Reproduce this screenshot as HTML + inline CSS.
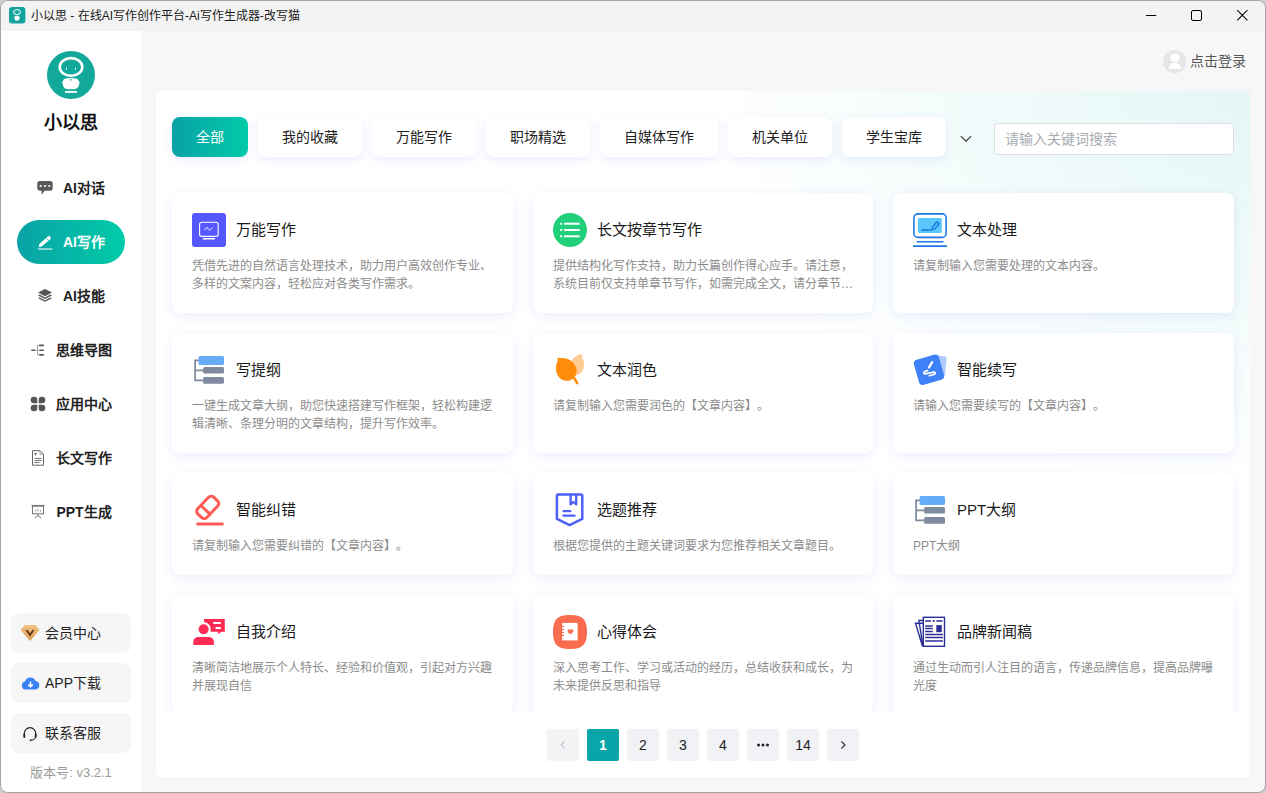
<!DOCTYPE html>
<html lang="zh-CN"><head><meta charset="utf-8">
<style>
*{margin:0;padding:0;box-sizing:border-box}
html,body{width:1266px;height:793px;overflow:hidden;background:#cdcdcd;font-family:"Liberation Sans",sans-serif;font-weight:350;text-spacing-trim:space-all}
.win{position:absolute;left:0;top:0;width:1266px;height:793px;border:1px solid #a3a3a3;border-radius:8px;overflow:hidden;background:#f7f7f7}
.a{position:absolute}
.tb{position:absolute;left:0;top:0;width:1264px;height:30px;background:#f3f3f3}
.tb .ttl{position:absolute;left:30px;top:7px;font-size:12px;line-height:16px;color:#1b1b1b;white-space:nowrap}
.side{position:absolute;left:0;top:30px;width:140px;height:762px;background:#fff}
.nav{position:absolute;left:0;width:140px;height:20px;line-height:20px;display:flex;align-items:center;justify-content:center;font-size:14px;font-weight:bold;color:#1f1f1f;white-space:nowrap}
.nav svg{margin-right:10px;flex:none}
.pill{position:absolute;left:16px;top:189px;width:108px;height:44px;border-radius:22px;background:linear-gradient(90deg,#0aa2a5,#01cba9)}
.sbtn{position:absolute;left:10px;width:120px;height:40px;border-radius:8px;background:#f6f6f6;font-size:14px;color:#222}
.sbtn svg{position:absolute}
.sbtn span{position:absolute;left:34px;top:11px;line-height:18px;white-space:nowrap}
.panel{position:absolute;left:155px;top:90px;width:1094px;height:686px;border-radius:4px;background:radial-gradient(ellipse 540px 400px at 100% 0%,#e4f6f6 0%,rgba(255,255,255,0) 100%),#fff;overflow:hidden}
.tabs{position:absolute;left:16px;top:26px;height:40px;display:flex}
.tab{height:40px;padding:0 24px;margin-right:10px;border-radius:8px;background:#fff;font-size:14px;color:#222;line-height:40px;white-space:nowrap;box-shadow:0 3px 10px rgba(70,90,255,.10)}
.tab.on{background:linear-gradient(90deg,#0aa2a5,#01cba9);color:#fff}
.search{position:absolute;left:838px;top:32px;width:240px;height:32px;border:1px solid #dcdfe6;border-radius:4px;background:#fff;font-size:14px;color:#a8abb2;line-height:30px;padding-left:10px;white-space:nowrap}
.grid{position:absolute;left:0;top:82px;width:1094px;height:540px;overflow:hidden}
.card{position:absolute;width:341px;height:120px;background:#fff;border-radius:8px;box-shadow:0 3px 12px rgba(70,90,255,.10)}
.card svg{position:absolute;left:20px;top:20px}
.card .t{position:absolute;left:64px;top:20px;font-size:15px;line-height:34px;color:#1a1a1a;white-space:nowrap}
.card .d{position:absolute;left:20px;top:64px;font-size:12px;line-height:18px;color:#8c8c8c;white-space:nowrap}
.pg{position:absolute;top:638px;width:32px;height:32px;border-radius:2px;background:#f0f2f5;font-size:14px;color:#222;text-align:center;line-height:32px}
.pg.on{background:#08a6a8;color:#fff;font-weight:bold}
.pg.dis{background:#f4f4f6}
</style></head><body>
<div class="win">
  <div class="tb">
    <svg class="a" style="left:8px;top:6px" width="17" height="17" viewBox="0 0 17 17"><rect x="0" y="0" width="16.4" height="16.4" rx="3" fill="#12a49c"/><ellipse cx="8" cy="5.2" rx="3.5" ry="2.6" fill="none" stroke="#fff" stroke-width="1"/><circle cx="6.7" cy="5.6" r=".45" fill="#fff"/><circle cx="9.3" cy="5.6" r=".45" fill="#fff"/><path d="M5.9 9.2q2.1-.6 4.2 0l.5.8.6.3-.6.3q0 2.6-1.6 2.9H7q-1.6-.3-1.6-2.9l-.6-.3.6-.3z" fill="#fff"/></svg>
    <div class="ttl">小以思 - 在线AI写作创作平台-Ai写作生成器-改写猫</div>
    <svg class="a" style="left:1140px;top:4px" width="20" height="20"><path d="M5 10.5h10.2" stroke="#000" stroke-width="1"/></svg>
    <svg class="a" style="left:1185px;top:4px" width="20" height="20"><rect x="5.5" y="5.5" width="10" height="10" rx="1.5" fill="none" stroke="#000" stroke-width="1"/></svg>
    <svg class="a" style="left:1231px;top:4px" width="20" height="20"><path d="M5.2 5.2l10.2 10.2M15.4 5.2l-10.2 10.2" stroke="#000" stroke-width="1.05"/></svg>
  </div>
  <div class="side">
    <svg class="a" style="left:46px;top:20px" width="48" height="48" viewBox="0 0 48 48"><circle cx="24" cy="24" r="24" fill="#12a89a"/><ellipse cx="24" cy="16" rx="11.3" ry="8.9" fill="none" stroke="#fff" stroke-width="2.6"/><rect x="19" y="16.7" width="1" height="2" fill="#fff"/><rect x="28" y="16.7" width="1" height="2" fill="#fff"/><path d="M17.7 27.8Q23.9 26.2 30.1 27.8Q32 29 32.2 31.3L33.3 32.1 32.1 32.6Q32 37.8 27 38.3H20.8Q15.8 37.8 15.7 32.6L14.5 32.1 15.6 31.3Q15.8 29 17.7 27.8z" fill="#fff"/><circle cx="23.9" cy="28.9" r=".8" fill="#12a89a"/><rect x="18" y="40" width="12" height="1.8" fill="#fff"/></svg>
    <div class="a" style="left:0;top:80px;width:140px;text-align:center;font-size:18px;font-weight:bold;line-height:24px;color:#111">小以思</div>
    <div class="nav" style="top:147px"><svg width="16" height="16" viewBox="0 0 16 16"><path d="M3 1h10a2.7 2.7 0 0 1 2.7 2.7v4.4a2.7 2.7 0 0 1-2.7 2.7H7.6L4.6 14.7V10.8H3A2.7 2.7 0 0 1 .3 8.1V3.7A2.7 2.7 0 0 1 3 1z" fill="#5a5a5a"/><circle cx="3.7" cy="6" r="1.05" fill="#fff"/><circle cx="8" cy="6" r="1.05" fill="#fff"/><circle cx="12.3" cy="6" r="1.05" fill="#fff"/></svg>AI对话</div>
    <div class="pill"></div>
    <div class="nav" style="top:201px;color:#fff"><svg width="16" height="16" viewBox="0 0 16 16"><path d="M1.6 12.9L2.31 9.9 10.81 2.5A1.8 1.8 0 0 1 13.17 5.22L4.67 12.62z" fill="#fff"/><path d="M11.5 6.6l-2.4-2.7" stroke="#06b3a6" stroke-width=".6"/><rect x="1" y="14.4" width="14.4" height="1.3" fill="#fff" opacity=".8"/></svg>AI写作</div>
    <div class="nav" style="top:255px"><svg width="16" height="16" viewBox="0 0 16 16"><path d="M8 1l7 3.6-7 3.6-7-3.6z" fill="#555"/><path d="M1 7.4l1.6-.8L8 9.4l5.4-2.8 1.6.8L8 11z" fill="#555"/><path d="M1 10.2l1.6-.8L8 12.2l5.4-2.8 1.6.8L8 13.8z" fill="#555"/></svg>AI技能</div>
    <div class="nav" style="top:309px"><svg width="16" height="16" viewBox="0 0 16 16"><rect x="1" y="7.4" width="4.5" height="1.6" rx=".8" fill="#555"/><path d="M9 3.3h-1.4v9.6H9M5.5 8.2h2" fill="none" stroke="#888" stroke-width=".8"/><rect x="9" y="2.5" width="5" height="1.7" rx=".8" fill="#555"/><rect x="9" y="7.4" width="5" height="1.7" rx=".8" fill="#555"/><rect x="9" y="12.1" width="5" height="1.7" rx=".8" fill="#555"/></svg>思维导图</div>
    <div class="nav" style="top:363px"><svg width="16" height="16" viewBox="0 0 16 16"><path d="M7.3 7.3H4A3.3 3.3 0 1 1 7.3 4z" fill="#555"/><path d="M8.7 7.3H12A3.3 3.3 0 1 0 8.7 4z" fill="#555"/><path d="M7.3 8.7H4A3.3 3.3 0 1 0 7.3 12z" fill="#555"/><path d="M8.7 8.7H12A3.3 3.3 0 1 1 8.7 12z" fill="#555"/></svg>应用中心</div>
    <div class="nav" style="top:417px"><svg width="16" height="16" viewBox="0 0 16 16"><path d="M2.5 .7h7.5l3.5 3.5v11h-11z" fill="none" stroke="#666" stroke-width="1"/><path d="M10 .7v3.5h3.5" fill="none" stroke="#888" stroke-width=".8"/><path d="M4 3.6h3M5.5 3.6v2M4.5 8.5h7M4.5 10.5h7M4.5 12.5h5" stroke="#666" stroke-width=".9"/></svg>长文写作</div>
    <div class="nav" style="top:471px"><svg width="16" height="16" viewBox="0 0 16 16"><path d="M1.5 1.5h13" stroke="#777" stroke-width="1.2"/><rect x="2.5" y="2.2" width="11" height="7.6" fill="none" stroke="#777" stroke-width="1"/><path d="M5.5 7.5v-2M8 7.5v-3M10.5 7.5v-1.5" stroke="#999" stroke-width="1"/><path d="M8 9.8v2M8 11.5l-3 2.5M8 11.5l3 2.5" stroke="#777" stroke-width="1"/></svg>PPT生成</div>
    <div class="sbtn" style="top:582px"><svg style="left:9px;top:11px" width="20" height="18" viewBox="0 0 20 18"><defs><linearGradient id="dg" x1="0" y1="0" x2="0" y2="1"><stop offset="0" stop-color="#f3c386"/><stop offset="1" stop-color="#dc9a52"/></linearGradient></defs><path d="M4.5 1h11l4 5-9.5 11L.5 6z" fill="url(#dg)"/><path d="M6.5 6l3.5 5 3.5-5" fill="none" stroke="#5a3510" stroke-width="1.8"/></svg><span>会员中心</span></div>
    <div class="sbtn" style="top:632px"><svg style="left:10px;top:14px" width="19" height="13" viewBox="0 0 19 13"><path d="M4.5 12.5A4 4 0 0 1 4 4.6 5.5 5.5 0 0 1 14.5 4a4.3 4.3 0 0 1 .3 8.5z" fill="#3981f5"/><path d="M9.5 4.5v5M7.3 7.6l2.2 2.2 2.2-2.2" fill="none" stroke="#fff" stroke-width="1.5"/></svg><span>APP下载</span></div>
    <div class="sbtn" style="top:682px"><svg style="left:11px;top:12px" width="16" height="17" viewBox="0 0 16 17"><path d="M2.3 10.5V8.3a5.7 5.7 0 0 1 11.4 0v2.2" fill="none" stroke="#222" stroke-width="1.1"/><path d="M2.3 9.2v2.8M13.7 9.2v2.8" stroke="#222" stroke-width="1.8" stroke-linecap="round"/><path d="M13.7 12.2q-.4 2.8-4.4 3" fill="none" stroke="#222" stroke-width="1"/><circle cx="8.6" cy="15.2" r="1" fill="#222"/></svg><span>联系客服</span></div>
    <div class="a" style="left:0;top:734px;width:140px;text-align:center;font-size:13px;line-height:16px;color:#9a9a9a;white-space:nowrap">版本号: v3.2.1</div>
  </div>
  <svg class="a" style="left:1161px;top:48px" width="25" height="25" viewBox="0 0 25 25"><circle cx="12.6" cy="12.6" r="11.7" fill="#e6e6e6"/><ellipse cx="12.8" cy="8.9" rx="4.6" ry="4.3" fill="#fff"/><path d="M6.5 19.2q.3-5.2 6.3-5.2t6.3 5.2q0 .9-1 .9H7.5q-1 0-1-.9z" fill="#fff"/></svg>
  <div class="a" style="left:1189px;top:50px;font-size:14px;line-height:20px;color:#555;white-space:nowrap">点击登录</div>
  <div class="panel">
    <div class="tabs">
      <div class="tab on">全部</div><div class="tab">我的收藏</div><div class="tab">万能写作</div><div class="tab">职场精选</div><div class="tab">自媒体写作</div><div class="tab">机关单位</div><div class="tab">学生宝库</div>
    </div>
    <svg class="a" style="left:803px;top:42px" width="14" height="10" viewBox="0 0 14 10"><path d="M1.8 3.2l5.2 5 5.2-5" fill="none" stroke="#303133" stroke-width="1.1"/></svg>
    <div class="search">请输入关键词搜索</div>
    <div class="grid">
      <!-- row 1 -->
      <div class="card" style="left:16px;top:20px"><svg width="34" height="34" viewBox="0 0 34 34"><rect width="34" height="34" rx="3" fill="#5558fe"/><rect x="7.6" y="9.2" width="18.6" height="14.2" rx="2.2" fill="none" stroke="#fff" stroke-width="1.1"/><path d="M10.8 25.7h12.2" stroke="#fff" stroke-width="1.5"/><path d="M11.9 17.4l2.9-3.1 2.9 2.9 3.2-2.9" fill="none" stroke="#fff" stroke-opacity=".55" stroke-width="1.1"/></svg><div class="t">万能写作</div><div class="d">凭借先进的自然语言处理技术，助力用户高效创作专业、<br>多样的文案内容，轻松应对各类写作需求。</div></div>
      <div class="card" style="left:377px;top:20px;width:340px"><svg width="34" height="34" viewBox="0 0 34 34"><circle cx="17" cy="17" r="17" fill="#20d07a"/><g fill="#fff"><rect x="7.2" y="9.7" width="2" height="2" rx=".4"/><rect x="7.2" y="16" width="2" height="2" rx=".4"/><rect x="7.2" y="22.3" width="2" height="2" rx=".4"/><rect x="11.1" y="9.7" width="15.6" height="2"/><rect x="11.1" y="16" width="15.6" height="2"/><rect x="11.1" y="22.3" width="15.6" height="2"/></g></svg><div class="t">长文按章节写作</div><div class="d">提供结构化写作支持，助力长篇创作得心应手。请注意，<br>系统目前仅支持单章节写作，如需完成全文，请分章节…</div></div>
      <div class="card" style="left:737px;top:20px"><svg width="34" height="34" viewBox="0 0 34 34"><rect x=".9" y=".9" width="32.2" height="23.5" rx="4" fill="none" stroke="#1a77e6" stroke-width="1.6"/><rect x="5" y="5" width="23.8" height="15.1" rx="1.5" fill="#5ac6fb"/><path d="M9 16.9h9.8" stroke="#1a77e6" stroke-width="1.5" stroke-linecap="round"/><path d="M19 16.4l.4-2.2 4.4-5.4 2.3 1.9-4.4 5.4z" fill="none" stroke="#1a77e6" stroke-width="1.4" stroke-linejoin="round"/><path d="M3.7 28.8h26.7" stroke="#1a77e6" stroke-width="1.6"/><path d="M0 33.1h34" stroke="#1a77e6" stroke-width="1.6"/></svg><div class="t">文本处理</div><div class="d">请复制输入您需要处理的文本内容。</div></div>
      <!-- row 2 -->
      <div class="card" style="left:16px;top:160px"><svg width="34" height="34" viewBox="0 0 34 34"><path d="M7 7.4H3.1v19.9h8.2M3.1 17.45h8.2" fill="none" stroke="#7f8a9e" stroke-width="1.7"/><rect x="6.6" y="2.9" width="25.4" height="9" rx="1.5" fill="#65abf5"/><rect x="11.1" y="14" width="20.9" height="6.6" rx="1.5" fill="#7f8a9e"/><rect x="11.1" y="24.1" width="20.9" height="6.6" rx="1.5" fill="#7f8a9e"/></svg><div class="t">写提纲</div><div class="d">一键生成文章大纲，助您快速搭建写作框架，轻松构建逻<br>辑清晰、条理分明的文章结构，提升写作效率。</div></div>
      <div class="card" style="left:377px;top:160px;width:340px"><svg width="34" height="34" viewBox="0 0 34 34"><path d="M29.9 1c-.8 1.2-1.2 2.4-1 3.6 2.8 4 3.2 10.5-.5 14.6-2 2.2-4.4 3.2-6.6 3.3L18 8.5C21 3.5 25.5 1.3 29.9 1z" fill="#ffcd93"/><path d="M3.9 5c.6.9.9 1.8.8 2.9C2.2 12.5 2.3 19.8 6 24.3c3 3.6 8 4.3 12 2.6 4.6-2 6.6-7.4 5.3-11.8C21.6 9.6 16.5 5.8 11 5.3c-2.4-.2-4.8-.4-7.1-.3z" fill="#ff8c0b"/><path d="M21.3 25.2l2.8 5" stroke="#ff8c0b" stroke-width="2.6" stroke-linecap="round"/></svg><div class="t">文本润色</div><div class="d">请复制输入您需要润色的【文章内容】。</div></div>
      <div class="card" style="left:737px;top:160px"><svg width="34" height="34" viewBox="0 0 34 34"><rect x="16" y="2.6" width="16.8" height="21" rx="3" transform="rotate(6 24.4 13.1)" fill="#aec9fb"/><rect x="3" y="3.7" width="26" height="26" rx="4" transform="rotate(-16 16 16.7)" fill="#3e80f8"/><path d="M19.2 9.2l-3.2 5.2" stroke="#fff" stroke-width="2.3" stroke-linecap="round"/><path d="M14.6 17.6l-2.8.9c-1.6.6-1.4 2.5.3 2.3l8.8-1.6c1.6-.3 1.9 1.8.2 2.3l-4.8 1.3" fill="none" stroke="#fff" stroke-width="1.7" stroke-linecap="round" stroke-linejoin="round"/></svg><div class="t">智能续写</div><div class="d">请输入您需要续写的【文章内容】。</div></div>
      <!-- row 3 -->
      <div class="card" style="left:16px;top:300px;height:102px"><svg width="34" height="34" viewBox="0 0 34 34"><g transform="rotate(-46.5 15.7 14.4)" fill="none" stroke="#ff5a55" stroke-width="3"><rect x="4.2" y="8.1" width="23" height="12.6" rx="3.6"/><path d="M12.4 8.1v12.6" stroke-width="2.9"/></g><path d="M5.6 31h24.8" stroke="#ff5a55" stroke-width="3" stroke-linecap="round"/></svg><div class="t">智能纠错</div><div class="d">请复制输入您需要纠错的【文章内容】。</div></div>
      <div class="card" style="left:377px;top:300px;width:340px;height:102px"><svg width="34" height="34" viewBox="0 0 34 34"><path d="M6 1.5h22.2a1.1 1.1 0 0 1 1.1 1.1v23.3l-12.7 6.2-12.7-6.2V2.6a1.1 1.1 0 0 1 1.1-1.1z" fill="none" stroke="#4e5ff8" stroke-width="2.5" stroke-linejoin="round"/><path d="M17.6 2v9.4l2.8-2.4 2.8 2.4V2" fill="none" stroke="#4e5ff8" stroke-width="2.3" stroke-linejoin="round"/><path d="M10.5 18.2h6.8M10.5 22.7h11" stroke="#4e5ff8" stroke-width="2.3" stroke-linecap="round"/></svg><div class="t">选题推荐</div><div class="d">根据您提供的主题关键词要求为您推荐相关文章题目。</div></div>
      <div class="card" style="left:737px;top:300px;height:102px"><svg width="34" height="34" viewBox="0 0 34 34"><path d="M7 7.4H3.1v19.9h8.2M3.1 17.45h8.2" fill="none" stroke="#7f8a9e" stroke-width="1.7"/><rect x="6.6" y="2.9" width="25.4" height="9" rx="1.5" fill="#65abf5"/><rect x="11.1" y="14" width="20.9" height="6.6" rx="1.5" fill="#7f8a9e"/><rect x="11.1" y="24.1" width="20.9" height="6.6" rx="1.5" fill="#7f8a9e"/></svg><div class="t">PPT大纲</div><div class="d">PPT大纲</div></div>
      <!-- row 4 -->
      <div class="card" style="left:16px;top:422px"><svg width="34" height="34" viewBox="0 0 34 34"><circle cx="11.6" cy="14.3" r="5" fill="#ff2b55"/><path d="M1.3 29.9V27c0-3 2.4-5 5.4-5h9.8c3 0 5.4 2 5.4 5v2.9z" fill="#ff2b55"/><path d="M11.9 4h20.9v12.7h-3.2l-3.4 2.6v-2.6h-7.7a7.4 7.4 0 0 0-6.6-9.7z" fill="#ff2b55"/><path d="M21.2 7.9h7.6M23.5 13h5.3" stroke="#fff" stroke-width="2"/></svg><div class="t">自我介绍</div><div class="d">清晰简洁地展示个人特长、经验和价值观，引起对方兴趣<br>并展现自信</div></div>
      <div class="card" style="left:377px;top:422px;width:340px"><svg width="34" height="34" viewBox="0 0 34 34"><path d="M17 0C28 0 34 3 34 17S28 34 17 34 0 31 0 17 6 0 17 0z" fill="#f96c4f"/><rect x="9.2" y="7.9" width="15.4" height="17.5" fill="#fff"/><path d="M8.5 11.4h2.6M8.5 14.5h2.6M8.5 17.5h2.6M8.5 20.4h2.6" stroke="#f96c4f" stroke-width="1"/><path d="M17.5 19.6l-2.6-2.7a1.6 1.6 0 0 1 2.6-2 1.6 1.6 0 0 1 2.6 2z" fill="#f96c4f"/></svg><div class="t">心得体会</div><div class="d">深入思考工作、学习或活动的经历，总结收获和成长，为<br>未来提供反思和指导</div></div>
      <div class="card" style="left:737px;top:422px"><svg width="34" height="34" viewBox="0 0 34 34"><g fill="none" stroke="#2c2f95" stroke-width="1.4"><path d="M10.3 5.5H5.9L10 31.3M10.3 8.3H2.5L9.5 31.3"/><rect x="10.3" y="2.3" width="21.2" height="29"/></g><g stroke="#2c2f95" stroke-width="1.5"><path d="M12.2 6h5.8M23.3 6h6.2M12.2 11h7.6M12.2 13.6h7.6M12.2 16.6h7.6M12.2 19.5h17.7M12.2 22.6h17.7M12.2 26.1h17.7"/></g><circle cx="20.6" cy="6" r="1.1" fill="#2c2f95"/><rect x="23.3" y="10.1" width="5.5" height="7.1" fill="#2c2f95"/></svg><div class="t">品牌新闻稿</div><div class="d">通过生动而引人注目的语言，传递品牌信息，提高品牌曝<br>光度</div></div>
    </div>
    <div class="pg dis" style="left:391px;color:#c0c4cc"><svg style="position:absolute;left:11px;top:10px" width="10" height="12" viewBox="0 0 10 12"><path d="M6.5 2.5L3 6l3.5 3.5" fill="none" stroke="#c0c4cc" stroke-width="1.2"/></svg></div>
    <div class="pg on" style="left:431px">1</div>
    <div class="pg" style="left:471px">2</div>
    <div class="pg" style="left:511px">3</div>
    <div class="pg" style="left:551px">4</div>
    <div class="pg" style="left:591px"><svg style="position:absolute;left:9px;top:14px" width="14" height="4" viewBox="0 0 14 4"><circle cx="2.5" cy="2" r="1.5" fill="#222"/><circle cx="7" cy="2" r="1.5" fill="#222"/><circle cx="11.5" cy="2" r="1.5" fill="#222"/></svg></div>
    <div class="pg" style="left:631px">14</div>
    <div class="pg" style="left:671px"><svg style="position:absolute;left:11px;top:10px" width="10" height="12" viewBox="0 0 10 12"><path d="M3.5 2.5L7 6 3.5 9.5" fill="none" stroke="#333" stroke-width="1.2"/></svg></div>
  </div>
</div>
</body></html>
